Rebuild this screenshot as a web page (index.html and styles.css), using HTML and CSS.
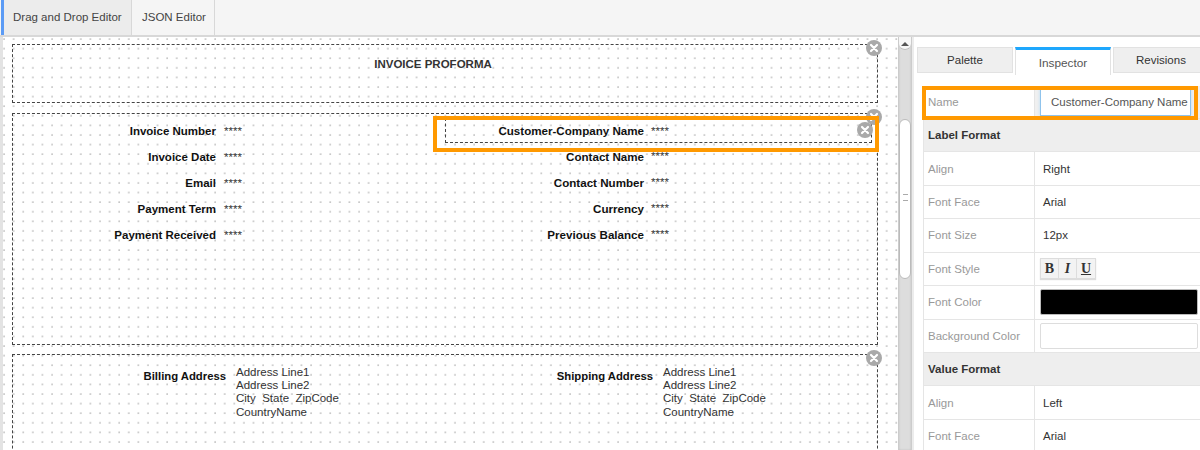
FILE: index.html
```html
<!DOCTYPE html>
<html lang="en">
<head>
<meta charset="utf-8">
<title>Invoice Layout Editor</title>
<link rel="stylesheet" href="styles.css">
</head>
<body>
<div class="app">
  <nav class="topbar">
    <div class="toptab active">Drag and Drop Editor</div>
    <div class="toptab">JSON Editor</div>
  </nav>
  <div class="workspace">
    <main class="canvas">
      <section class="block block-title">
        <span class="close"><svg viewBox="0 0 16 16"><circle cx="8" cy="8" r="8"/><path d="M5 5l6 6M11 5l-6 6"/></svg></span>
        <h1 class="doc-title">INVOICE PROFORMA</h1>
      </section>
      <section class="block block-fields">
        <span class="close"><svg viewBox="0 0 16 16"><circle cx="8" cy="8" r="8"/><path d="M5 5l6 6M11 5l-6 6"/></svg></span>
        <div class="columns">
          <div class="col col-left">
            <div class="field"><b>Invoice Number</b><span>****</span></div>
            <div class="field"><b>Invoice Date</b><span>****</span></div>
            <div class="field"><b>Email</b><span>****</span></div>
            <div class="field"><b>Payment Term</b><span>****</span></div>
            <div class="field"><b>Payment Received</b><span>****</span></div>
          </div>
          <div class="col col-right">
            <div class="field selected"><b>Customer-Company Name</b><span>****</span>
              <span class="close close-field"><svg viewBox="0 0 16 16"><circle cx="8" cy="8" r="8"/><path d="M5 5l6 6M11 5l-6 6"/></svg></span>
            </div>
            <div class="field"><b>Contact Name</b><span>****</span></div>
            <div class="field"><b>Contact Number</b><span>****</span></div>
            <div class="field"><b>Currency</b><span>****</span></div>
            <div class="field"><b>Previous Balance</b><span>****</span></div>
          </div>
        </div>
        <div class="highlight highlight-field"></div>
      </section>
      <section class="block block-address">
        <span class="close"><svg viewBox="0 0 16 16"><circle cx="8" cy="8" r="8"/><path d="M5 5l6 6M11 5l-6 6"/></svg></span>
        <div class="address-columns">
          <div class="address address-left"><b>Billing Address</b><p>Address Line1<br>Address Line2<br>City&nbsp; State&nbsp; ZipCode<br>CountryName</p></div>
          <div class="address address-right"><b>Shipping Address</b><p>Address Line1<br>Address Line2<br>City&nbsp; State&nbsp; ZipCode<br>CountryName</p></div>
        </div>
      </section>
    </main>
    <div class="scrollbar">
      <div class="scroll-up"><i></i></div>
      <div class="scroll-thumb"><i></i></div>
    </div>
    <aside class="panel">
      <div class="panel-tabs">
        <div class="panel-tab">Palette</div>
        <div class="panel-tab current">Inspector</div>
        <div class="panel-tab">Revisions</div>
      </div>
      <div class="props">
        <div class="row name-row"><div class="key">Name</div><div class="val"><input class="name-input" value="Customer-Company Name"></div></div>
        <div class="heading">Label Format</div>
        <div class="row"><div class="key">Align</div><div class="val">Right</div></div>
        <div class="row"><div class="key">Font Face</div><div class="val">Arial</div></div>
        <div class="row"><div class="key">Font Size</div><div class="val">12px</div></div>
        <div class="row"><div class="key">Font Style</div><div class="val"><div class="styles"><span class="st-b">B</span><span class="st-i">I</span><span class="st-u">U</span></div></div></div>
        <div class="row"><div class="key">Font Color</div><div class="val"><div class="swatch black"></div></div></div>
        <div class="row"><div class="key">Background Color</div><div class="val"><div class="swatch"></div></div></div>
        <div class="heading">Value Format</div>
        <div class="row"><div class="key">Align</div><div class="val">Left</div></div>
        <div class="row"><div class="key">Font Face</div><div class="val">Arial</div></div>
      </div>
      <div class="highlight highlight-name"></div>
    </aside>
  </div>
</div>
</body>
</html>
```
FILE: styles.css
```css
* { box-sizing: border-box; }
html, body { margin: 0; height: 100%; overflow: hidden; }
body { font-family: "Liberation Sans", Arial, sans-serif; font-size: 11.5px; color: #222; background: #fff; }
.app { width: 1200px; height: 450px; overflow: hidden; display: flex; flex-direction: column; }

.topbar { height: 37px; flex: none; display: flex; background: #f5f5f5; border-bottom: 2px solid #d8d8d8; padding-left: 1px; }
.toptab { height: 35px; line-height: 34px; font-size: 11.5px; color: #444; border-right: 1px solid #d8d8d8; white-space: nowrap; }
.toptab.active { width: 131px; background: #ececec; border-left: 3px solid #5b9bf5; padding-left: 9px; }
.toptab:nth-child(2) { width: 83px; padding-left: 10px; }

.workspace { flex: 1; display: flex; min-height: 0; }
.canvas { width: 898px; flex: none; padding: 7px 0 0 9px; border-left: 3px solid #e3e3e3; overflow: hidden;
  background-color: #fff;
  background-image: radial-gradient(circle at 1px 1px, #9a9a9a 0.45px, transparent 0.85px);
  background-size: 9.6px 9.6px; background-position: 0 1px; }
.block { position: relative; width: 866px; border: 1px dashed #444; }
.block-title { height: 59px; margin-bottom: 10px; }
.block-fields { height: 232px; margin-bottom: 9px; }
.block-address { height: 120px; }
.close { position: absolute; top: -5px; right: -5px; width: 16px; height: 16px; z-index: 2; }
.close svg { display: block; width: 16px; height: 16px; }
.close circle { fill: #a9a9a9; }
.close path { stroke: #fff; stroke-width: 2.2; stroke-linecap: round; fill: none; }
.doc-title { margin: 12px 24px 0 0; font-size: 11.5px; line-height: 14px; font-weight: 700; color: #333; text-align: center; }

.columns { display: flex; padding-top: 4px; }
.col { width: 428px; }
.col-right { margin-left: 4px; width: 434px; }
.field { position: relative; height: 26px; display: flex; align-items: center; color: #333; }
.field b { color: #111; text-align: right; }
.col-left .field b { width: 203px; }
.col-left .field span { margin-left: 8px; }
.col-right .field b { width: 200px; font-size: 11.6px; }
.col-right .field span { margin-left: 7px; }
.field.selected { height: 25px; margin: 0 0 0 1px; width: 427px; border: 1px dashed #444; }
.col-right .field.selected > b { width: 198px; }
.close.close-field { top: 3px; right: -2px; margin: 0; }

.highlight { position: absolute; border: 4px solid #ff9900; pointer-events: none; z-index: 3; }
.highlight-field { left: 420px; top: 2px; width: 446px; height: 36px; }

.address-columns { display: flex; padding-top: 11px; }
.address { display: flex; }
.address b { text-align: right; color: #111; padding-top: 4px; font-size: 11.3px; }
.address p { margin: 0; line-height: 13.2px; color: #333; }
.address-left { width: 427px; }
.address-left b { width: 213px; margin-right: 10px; }
.address-right b { width: 213px; margin-right: 10px; }

.scrollbar { position: relative; width: 14px; flex: none; background: #ddd; border-left: 1px solid #ccc; border-right: 1px solid #ccc; box-shadow: inset 0 0 2px #bbb; }
.scroll-up { height: 13px; background: #f7f7f7; border-bottom: 1px solid #bbb; border-radius: 0 0 6px 6px; display: flex; justify-content: center; padding-top: 5px; }
.scroll-up i { width: 0; height: 0; border: 4px solid transparent; border-top: 0; border-bottom: 4px solid #555; }
.scroll-thumb { height: 160px; position: relative; background: #fff; border: 1px solid #bbb; border-radius: 6px; margin-top: 69px; }
.scroll-thumb i { position: absolute; left: 3px; top: 74px; width: 5px; height: 7px; border-top: 1px solid #aaa; border-bottom: 1px solid #aaa; }

.panel { position: relative; flex: 1; min-width: 0; background: #fff; padding: 10px 0 0 3px; overflow: hidden; border-left: 2px solid #ececec; }
.panel-tabs { display: flex; gap: 2px; height: 29px; align-items: flex-start; }
.panel-tab { flex: none; width: 96px; height: 26px; line-height: 25px; text-align: center; background: #efefef; border: 1px solid #e2e2e2; color: #333; }
.panel-tab.current { height: 28px; background: #fff; border-top: 3px solid #1ea7fd; border-bottom: 0; line-height: 26px; color: #555; font-size: 11.8px; }
.panel-tab:last-child { width: 96px; }

.props { margin: 9.5px 0 0 6px; border-left: 1px solid #e5e5e5; }
.row { display: flex; height: 33.45px; border-bottom: 1px solid #e5e5e5; align-items: center; }
.key { width: 111px; height: 100%; flex: none; padding-left: 4px; color: #999; border-right: 1px solid #e5e5e5; display: flex; align-items: center; }
.val { flex: 1; padding-left: 8px; color: #333; display: flex; align-items: center; min-width: 0; height: 100%; }
.heading { height: 33.45px; line-height: 32px; padding-left: 4px; font-weight: 700; color: #333; background: #eee; border-bottom: 1px solid #e5e5e5; }
.name-row .val { padding: 2px 9px 2px 5px; background: #f0f0f0; }
.name-input { width: 100%; height: 28px; border: 1px solid #8fc3ec; font: 11.5px "Liberation Sans", Arial, sans-serif; color: #555; padding: 0 0 0 10px; box-shadow: 0 0 3px #b8dcf5; outline: 0; background: #fff; }
.styles { display: inline-flex; border: 1px solid #ddd; background: #f3f3f3; margin-left: -3px; box-shadow: 0 1px 1px #ddd; height: 21px; }
.styles span { width: 18px; height: 19px; line-height: 19px; text-align: center; font-family: "Liberation Serif", serif; font-size: 14px; font-weight: 700; color: #333; border-right: 1px solid #ddd; }
.styles .st-i { font-style: italic; }
.styles .st-u { text-decoration: underline; border-right: 0; }
.swatch { width: 158px; height: 26px; margin-left: -3px; border: 1px solid #ddd; border-radius: 2px; background: #fff; }
.swatch.black { background: #000; border-color: #bbb; }
.highlight-name { left: 8px; top: 49px; width: 276px; height: 34px; }
```
